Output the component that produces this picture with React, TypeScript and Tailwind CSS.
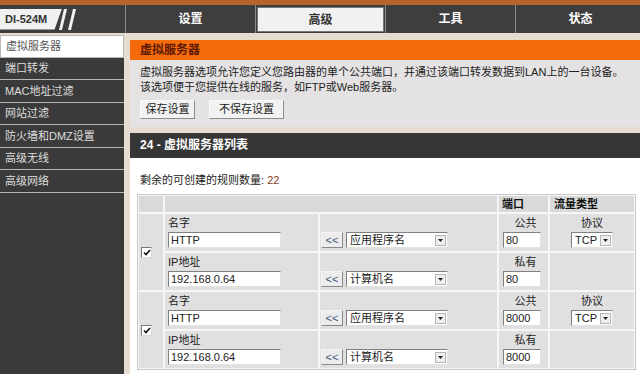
import React from 'react';

const font = "font-['Liberation_Sans','Noto_Sans_CJK_SC',sans-serif]";

const tabs = ['设置', '高级', '工具', '状态'];
const menu = ['虚拟服务器', '端口转发', 'MAC地址过滤', '网站过滤', '防火墙和DMZ设置', '高级无线', '高级网络'];

const cellBase = 'bg-[#e0e0e0]';

const Box: React.FC<{ value: string; w: string }> = ({ value, w }) => (
  <div
    className={`${w} h-[16px] shrink-0 border border-b-[#e2e2e2] border-l-[#808080] border-r-[#e2e2e2] border-t-[#808080] bg-white pl-[2px] text-[11px] leading-[14px] text-[#222]`}
  >
    {value}
  </div>
);

const Dropdown: React.FC<{ text: string; w: string }> = ({ text, w }) => (
  <div
    className={`${w} flex h-[16px] shrink-0 items-center border border-b-[#e2e2e2] border-l-[#808080] border-r-[#e2e2e2] border-t-[#808080] bg-white pl-[3px] text-[11px] leading-[14px] text-[#222]`}
  >
    <span>{text}</span>
    <span className="ml-auto mr-[1px] flex h-[11px] w-[11px] items-center justify-center border border-[#b5b5b5] bg-[#efefef]">
      <svg width="5" height="3" viewBox="0 0 5 3">
        <path d="M0 0h5L2.5 3z" fill="#222" />
      </svg>
    </span>
  </div>
);

const Arrows: React.FC = () => (
  <div className="flex h-[16px] w-[22px] shrink-0 items-center justify-center border border-b-[#8a8a8a] border-l-[#f4f4f4] border-r-[#8a8a8a] border-t-[#f4f4f4] bg-[#ececec] text-[11px] leading-none text-[#3c5580]">
    &lt;&lt;
  </div>
);

const Check: React.FC = () => (
  <div className="flex h-[11px] w-[11px] items-center justify-center border border-b-[#d8d8d8] border-l-[#7a7a7a] border-r-[#d8d8d8] border-t-[#7a7a7a] bg-white">
    <svg width="8" height="7" viewBox="0 0 8 7">
      <path d="M1 3.5l2 2L7 1" fill="none" stroke="#111" strokeWidth="1.6" />
    </svg>
  </div>
);

const Labeled: React.FC<{ label: string; children: React.ReactNode; center?: boolean; labelCenter?: boolean; pl?: string }> = ({
  label,
  children,
  center,
  labelCenter,
  pl = '',
}) => (
  <div className={`${cellBase} flex flex-col justify-end pb-[3px] ${pl} ${center ? 'items-center' : ''}`}>
    <span className={`mb-[2px] text-[11px] leading-[14px] text-[#222] ${labelCenter ? 'self-center' : ''}`}>{label}</span>
    {children}
  </div>
);

const RuleRows: React.FC<{ port: string }> = ({ port }) => (
  <>
    <div className={`${cellBase} row-span-2 flex items-center pl-[2px]`}>
      <Check />
    </div>
    <Labeled label="名字" pl="pl-[3px]">
      <Box value="HTTP" w="w-[113px]" />
    </Labeled>
    <div className={`${cellBase} flex items-end gap-[3px] pb-[3px] pl-[1px]`}>
      <Arrows />
      <Dropdown text="应用程序名" w="w-[102px]" />
    </div>
    <Labeled label="公共" pl="pl-[4px]" labelCenter>
      <Box value={port} w="w-[38px]" />
    </Labeled>
    <Labeled label="协议" center>
      <Dropdown text="TCP" w="w-[42px]" />
    </Labeled>

    <Labeled label="IP地址" pl="pl-[3px]">
      <Box value="192.168.0.64" w="w-[113px]" />
    </Labeled>
    <div className={`${cellBase} flex items-end gap-[3px] pb-[3px] pl-[1px]`}>
      <Arrows />
      <Dropdown text="计算机名" w="w-[102px]" />
    </div>
    <Labeled label="私有" pl="pl-[4px]" labelCenter>
      <Box value={port} w="w-[38px]" />
    </Labeled>
    <div className={cellBase} />
  </>
);

const Logo: React.FC = () => (
  <div className="flex items-center">
    <div className="flex h-[21px] w-[62px] items-center bg-[#f1f1f1] pl-[5px] text-[11px] font-bold text-[#333] [clip-path:polygon(0_0,100%_0,88%_100%,0_100%)]">
      DI-524M
    </div>
    <svg width="20" height="21" viewBox="0 0 20 21" className="-ml-[3px]">
      <path d="M5 0h3L3 21H0z" fill="#f1f1f1" />
      <path d="M14 0h3l-5 21H9z" fill="#f1f1f1" />
    </svg>
  </div>
);

export default function App() {
  return (
    <div className={`flex h-[374px] w-[640px] flex-col overflow-hidden bg-[#e6ddd0] ${font}`}>
      <div className="h-[5px] shrink-0 bg-[#b8622f]" />

      <div className="flex h-[28px] shrink-0 bg-[#3e3e3e]">
        <div className="flex w-[125px] shrink-0 items-center">
          <Logo />
        </div>
        {tabs.map((t) =>
          t === '高级' ? (
            <div key={t} className="w-[130px] shrink-0 border-l border-[#8c8c8c] px-[1px] pb-[1px] pt-[2px]">
              <div className="flex h-full items-center justify-center border border-[#777] bg-[#f1f1f1] text-[12px] font-bold text-[#333]">
                {t}
              </div>
            </div>
          ) : (
            <div
              key={t}
              className="flex w-[130px] shrink-0 items-center justify-center border-l border-[#8c8c8c] text-[12px] font-bold text-white"
            >
              {t}
            </div>
          ),
        )}
      </div>

      <div className="flex min-h-0 flex-1 pt-[2px]">
        <nav className="w-[124px] shrink-0 bg-[#3a3a3a]">
          {menu.map((m, i) => (
            <div
              key={m}
              className={`flex h-[22.5px] items-center border-b border-[#b8b8b8] pl-[5px] text-[11px] ${
                i === 0 ? 'border border-[#555] bg-white text-[#555]' : 'text-[#dedede]'
              }`}
            >
              {m}
            </div>
          ))}
        </nav>

        <main className="flex min-w-0 flex-1 flex-col pl-[6px] pt-[5px]">
          <div className="h-[20px] shrink-0 bg-[#f56b0c] pl-[10px] text-[12px] font-bold leading-[20px] text-[#5c1800]">
            虚拟服务器
          </div>
          <div className="h-[67px] shrink-0 bg-[#e4e2e2] px-[10px] pt-[5px] text-[11px] leading-[15px] text-[#222]">
            <p className="whitespace-nowrap">虚拟服务器选项允许您定义您路由器的单个公共端口，并通过该端口转发数据到LAN上的一台设备。</p>
            <p>该选项便于您提供在线的服务，如FTP或Web服务器。</p>
            <div className="mt-[5px] flex gap-[14px]">
              <div className="flex h-[19px] w-[55px] items-center justify-center border border-b-[#8c8c8c] border-l-[#fafafa] border-r-[#8c8c8c] border-t-[#fafafa] bg-[#f2f2f2] text-[11px] text-[#222]">
                保存设置
              </div>
              <div className="flex h-[19px] w-[75px] items-center justify-center border border-b-[#8c8c8c] border-l-[#fafafa] border-r-[#8c8c8c] border-t-[#fafafa] bg-[#f2f2f2] text-[11px] text-[#222]">
                不保存设置
              </div>
            </div>
          </div>

          <div className="mt-[6px] h-[25px] shrink-0 bg-[#363636] pl-[10px] text-[12px] font-bold leading-[25px] text-white">
            24 - 虚拟服务器列表
          </div>

          <section className="flex-1 bg-white pl-[7px] pt-[15px]">
            <p className="pl-[3px] text-[11px] leading-[14px] text-[#222]">
              剩余的可创建的规则数量: <span className="text-[#8b3a1a]">22</span>
            </p>
            <div className="mt-[7px] grid w-[499px] grid-cols-[24px_153px_177px_49px_84px] grid-rows-[16px_37px_37px_37px_37px] gap-[2px] border border-[#c9c9c9] bg-[#f6f6f6] p-[1px]">
              <div className="bg-[#d9d9d9]" />
              <div className="col-span-2 bg-[#d9d9d9]" />
              <div className="bg-[#d9d9d9] pl-[3px] text-[11px] font-bold leading-[16px] text-[#111]">端口</div>
              <div className="bg-[#d9d9d9] pl-[4px] text-[11px] font-bold leading-[16px] text-[#111]">流量类型</div>
              <RuleRows port="80" />
              <RuleRows port="8000" />
            </div>
          </section>
        </main>
      </div>
    </div>
  );
}
